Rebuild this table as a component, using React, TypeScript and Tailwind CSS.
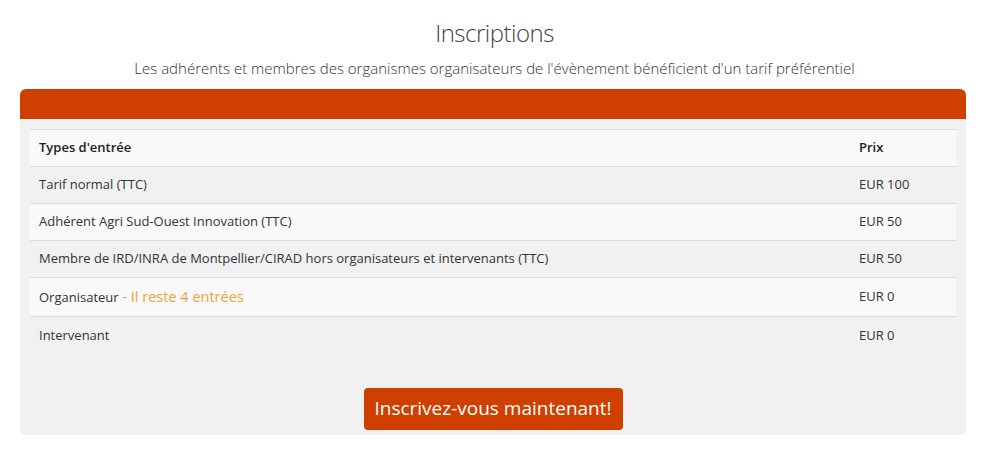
const rows = [
  { name: "Tarif normal (TTC)", price: "EUR 100" },
  { name: "Adhérent Agri Sud-Ouest Innovation (TTC)", price: "EUR 50" },
  { name: "Membre de IRD/INRA de Montpellier/CIRAD hors organisateurs et intervenants (TTC)", price: "EUR 50" },
  { name: "Organisateur", note: "- Il reste 4 entrées", price: "EUR 0" },
  { name: "Intervenant", price: "EUR 0" },
];

const App = () => {
  return (
    <div className="w-[989px] h-[458px] bg-white font-['Open_Sans',sans-serif] text-[#333]">
      <div className="pt-[18px] text-center">
        <h2 className="text-[24px] leading-[30px] font-light tracking-[-0.5px] text-[#444]">Inscriptions</h2>
        <p className="mt-[10px] text-[15px] leading-[20px] font-light text-[#333]">
          Les adhérents et membres des organismes organisateurs de l'évènement bénéficient d'un tarif préférentiel
        </p>
      </div>
      <div className="mx-[20px] mt-[11px] w-[946px]">
        <div className="h-[30px] rounded-t-[6px] bg-[#cf3f00]" />
        <div className="rounded-b-[6px] bg-[#f1f1f1] px-[10px] pt-[10px] pb-[5px]">
          <table className="w-full border-collapse text-[13px]">
            <thead>
              <tr className="bg-[#f9f9f9] border-t border-[#dddddd]">
                <th className="h-[37px] px-[9px] text-left font-semibold text-[#222]">Types d'entrée</th>
                <th className="h-[37px] w-[105px] px-[8px] text-left font-semibold text-[#222]">Prix</th>
              </tr>
            </thead>
            <tbody>
              {rows.map((r, i) => (
                <tr
                  key={r.name}
                  className={`border-t border-[#dddddd] ${i % 2 === 0 ? "bg-[#f1f1f1]" : "bg-[#f9f9f9]"}`}
                >
                  <td className={`${r.note ? "h-[39px]" : "h-[37px]"} px-[9px]`}>
                    {r.name}
                    {r.note && <span className="text-[14.5px] text-[#f0a23c]"> {r.note}</span>}
                  </td>
                  <td className="px-[8px]">{r.price}</td>
                </tr>
              ))}
            </tbody>
          </table>
          <div className="mt-[34px] flex justify-center">
            <button className="h-[42px] w-[259px] rounded-[4px] bg-[#cf3f00] text-[19px] text-white">
              Inscrivez-vous maintenant!
            </button>
          </div>
        </div>
      </div>
    </div>
  );
};

export default App;
